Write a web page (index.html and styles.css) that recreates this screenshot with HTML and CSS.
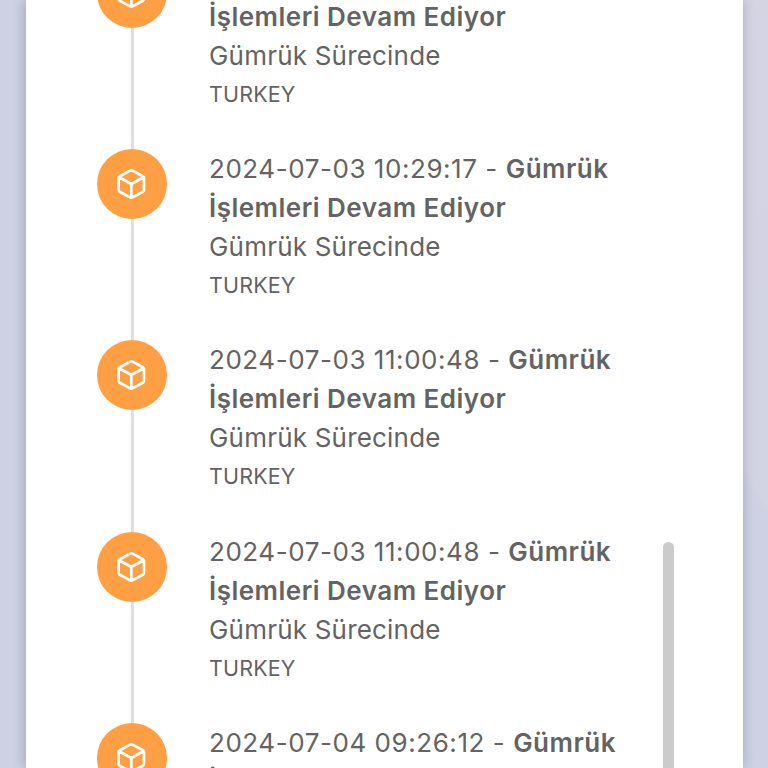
FILE: index.html
```
<!DOCTYPE html>
<html lang="tr">
<head>
	<meta charset="UTF-8">
	<meta name="viewport" content="width=device-width, initial-scale=1.0">
	<title>Kargo Takip</title>
	<link rel="stylesheet" href="styles.css">
</head>
<body>
	<svg class="sprite">
		<symbol id="box" viewBox="0 0 32 32">
			<path d="M16.5 2.6 L26.8 8.2 Q28 8.9 28 10.2 V21.8 Q28 23.1 26.8 23.8 L16.5 29.4 Q15.3 30 14.1 29.4 L3.8 23.8 Q2.6 23.1 2.6 21.8 V10.2 Q2.6 8.9 3.8 8.2 L14.1 2.6 Q15.3 2 16.5 2.6 Z M3.1 9.2 L15.3 16 L27.5 9.2 M15.3 16 V29" />
		</symbol>
	</svg>
	<div class="card">
		<ul class="timeline"></ul>
		<div class="scroll"></div>
	</div>

	<script>
		let timeline = document.querySelector('.timeline');
		let dates = [
			'2024-07-03 10:29:17',
			'2024-07-03 10:29:17',
			'2024-07-03 11:00:48',
			'2024-07-03 11:00:48',
			'2024-07-04 09:26:12'
		];

		let content = '';
		for (let i = 0; i < dates.length; i++) {
			content += `
				<li class="item">
					<div class="icon"><svg><use href="#box"></use></svg></div>
					<div class="info">
						<p class="date">${dates[i]} - <b>Gümrük<br>İşlemleri Devam Ediyor</b></p>
						<p>Gümrük Sürecinde</p>
						<p class="place">TURKEY</p>
					</div>
				</li>
			`;
		}
		timeline.innerHTML = content;
	</script>
</body>
</html>
```
FILE: styles.css
```
* {
	margin: 0;
	padding: 0;
	box-sizing: border-box;
}

body {
	height: 768px;
	overflow: hidden;
	padding: 0 25px 0 26px;
	background: linear-gradient(to bottom left, #d2d3e3 45%, #cdd1e3 60%) right -1px top 470px / 26px 45px no-repeat,
		linear-gradient(#d4d4e3, #d2d3e3) right top / 25px 470px no-repeat, #cdd1e3;
	font-family: Inter, "Liberation Sans", sans-serif;
}

.sprite {
	display: none;
}

.card {
	position: relative;
	height: 768px;
	overflow: hidden;
	background: #fff;
	box-shadow: -1px 0 12px rgba(70, 70, 80, 0.33);
}

.timeline {
	list-style: none;
	margin-top: -42.3px;
	padding-left: 70.5px;
}

.item {
	display: flex;
	gap: 42.5px;
	height: 191.4px;
	background: linear-gradient(#dcdfe3, #dcdfe3) 34px 0 / 3px 100% no-repeat;
}

.icon {
	display: flex;
	align-items: center;
	justify-content: center;
	width: 70px;
	height: 70px;
	border-radius: 50%;
	background: #ff9f43;
}

.icon svg {
	width: 32px;
	height: 32px;
	fill: none;
	stroke: #fff;
	stroke-width: 2.7;
	stroke-linecap: round;
	stroke-linejoin: round;
}

.info {
	color: #636363;
	font-size: 26px;
	line-height: 39px;
	letter-spacing: 0.2px;
	white-space: nowrap;
}

.info .date {
	letter-spacing: 0.55px;
}

.info b {
	font-weight: 600;
	letter-spacing: 0.49px;
}

.info .place {
	font-size: 21.5px;
	letter-spacing: 0.15px;
}

.scroll {
	position: absolute;
	top: 542px;
	right: 69px;
	width: 11px;
	height: 300px;
	border-radius: 6px;
	background: #cbcbcb;
}
```
